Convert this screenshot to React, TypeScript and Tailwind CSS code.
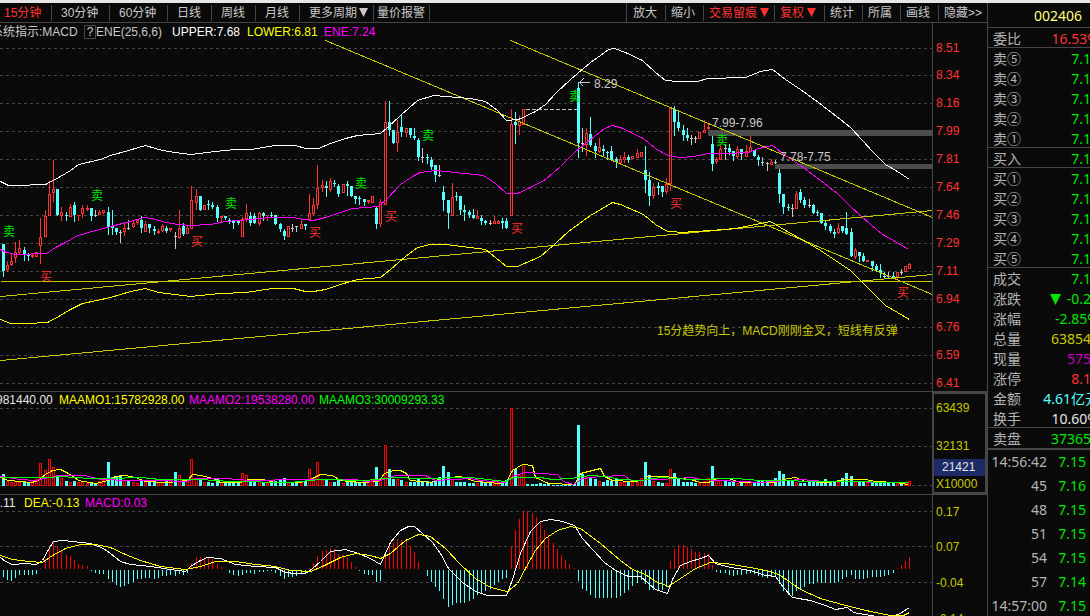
import clsx from 'clsx';

type Kind = 'u' | 'd' | 'w' | 'g';
// x, high, body top, body bottom, low, kind, volume bar, macd bar
type Bar = [number, number, number, number, number, Kind, number, number];

const bars: Bar[] = [
  [3, 244, 244, 271, 276, 'd', 12, -7], [7, 261, 265, 270, 272, 'u', 5, -10], [11, 253, 261, 265, 266, 'u', 4, -11],
  [15, 242, 252, 258, 263, 'u', 5, -8], [19, 240, 248, 253, 254, 'u', 4, -5], [24, 247, 250, 255, 260, 'd', 4, -5],
  [28, 253, 255, 256, 260, 'd', 3, -5], [32, 253, 255, 257, 258, 'u', 5, -5], [36, 252, 252, 257, 257, 'u', 7, -4],
  [40, 218, 237, 246, 264, 'u', 23, 1], [45, 210, 216, 237, 237, 'u', 16, 10], [49, 181, 194, 216, 216, 'u', 27, 20],
  [53, 160, 189, 193, 202, 'u', 19, 27], [57, 189, 189, 215, 215, 'd', 10, 23], [61, 207, 212, 216, 221, 'u', 8, 19],
  [66, 212, 215, 216, 220, 'd', 5, 14], [70, 204, 207, 217, 217, 'u', 4, 13], [74, 202, 205, 215, 221, 'd', 5, 9],
  [78, 215, 215, 216, 221, 'u', 4, 5], [82, 205, 208, 214, 218, 'u', 4, 4], [87, 205, 208, 210, 211, 'u', 3, 3],
  [91, 208, 208, 216, 220, 'd', 3, -1], [95, 210, 215, 215, 216, 'w', 3, -3], [99, 210, 212, 215, 215, 'u', 5, -4],
  [103, 210, 210, 213, 214, 'u', 6, -4], [108, 207, 212, 227, 234, 'd', 24, -9], [112, 210, 226, 228, 234, 'd', 9, -12],
  [116, 228, 228, 232, 234, 'd', 9, -15], [120, 230, 232, 232, 242, 'w', 11, -17], [124, 224, 228, 232, 236, 'u', 5, -16],
  [128, 220, 228, 228, 229, 'w', 5, -14], [133, 220, 223, 227, 228, 'u', 4, -12], [137, 219, 220, 223, 225, 'u', 3, -9],
  [141, 216, 220, 228, 232, 'd', 6, -9], [145, 221, 224, 232, 232, 'u', 4, -8], [149, 224, 224, 228, 232, 'd', 4, -8],
  [154, 226, 229, 231, 234, 'd', 4, -9], [158, 229, 231, 233, 234, 'u', 4, -8], [162, 224, 226, 231, 232, 'u', 4, -6],
  [166, 226, 228, 231, 232, 'd', 5, -6], [170, 228, 228, 230, 232, 'u', 6, -5], [175, 232, 236, 236, 248, 'w', 14, -6],
  [179, 210, 228, 238, 239, 'u', 11, -4], [183, 223, 226, 234, 235, 'd', 6, -5], [187, 226, 228, 234, 234, 'u', 5, -3],
  [191, 186, 200, 229, 229, 'u', 27, 6], [196, 189, 196, 203, 210, 'u', 8, 12], [200, 196, 196, 210, 210, 'd', 6, 12],
  [204, 205, 205, 210, 210, 'u', 4, 12], [208, 200, 204, 205, 209, 'd', 4, 11], [212, 202, 205, 207, 208, 'd', 3, 10],
  [217, 205, 207, 218, 221, 'd', 7, 5], [221, 216, 216, 218, 222, 'u', 4, 2], [225, 216, 216, 218, 219, 'd', 4, 0],
  [229, 218, 220, 222, 223, 'd', 4, -3], [233, 220, 221, 223, 228, 'd', 5, -5], [238, 221, 221, 223, 224, 'd', 5, -6],
  [242, 217, 219, 237, 237, 'u', 13, -5], [246, 204, 213, 219, 222, 'u', 11, -3], [250, 212, 216, 223, 225, 'd', 5, -3],
  [254, 213, 216, 223, 223, 'd', 5, -4], [259, 212, 213, 224, 226, 'u', 5, -2], [263, 212, 213, 216, 220, 'd', 4, -2],
  [267, 215, 215, 216, 221, 'u', 3, -1], [271, 212, 215, 216, 217, 'd', 4, -1], [275, 215, 215, 224, 224, 'd', 5, -3],
  [280, 223, 224, 229, 231, 'd', 6, -6], [284, 229, 231, 236, 239, 'd', 8, -9], [288, 226, 226, 237, 237, 'u', 4, -7],
  [292, 224, 228, 228, 231, 'w', 3, -7], [296, 226, 226, 226, 231, 'w', 4, -6], [301, 220, 224, 229, 229, 'u', 5, -4],
  [305, 224, 224, 226, 229, 'd', 5, -3], [309, 194, 213, 220, 221, 'u', 17, 1], [313, 198, 205, 214, 215, 'u', 8, 6],
  [317, 165, 188, 205, 209, 'u', 24, 13], [322, 180, 185, 188, 192, 'u', 6, 18], [326, 181, 186, 188, 196, 'd', 6, 19],
  [330, 178, 181, 190, 192, 'u', 4, 21], [334, 180, 183, 184, 186, 'd', 4, 20], [338, 184, 186, 194, 196, 'd', 6, 15],
  [343, 184, 184, 193, 193, 'u', 3, 14], [347, 181, 184, 186, 195, 'd', 4, 12], [351, 186, 186, 196, 196, 'd', 4, 7],
  [355, 196, 196, 199, 203, 'd', 4, 2], [359, 196, 198, 199, 204, 'd', 3, -1], [364, 199, 199, 202, 205, 'd', 3, -4],
  [368, 200, 200, 202, 204, 'u', 4, -5], [372, 196, 196, 203, 203, 'u', 6, -5], [376, 206, 208, 224, 228, 'd', 19, -12],
  [380, 199, 202, 224, 227, 'u', 8, -11], [385, 101, 122, 205, 205, 'u', 41, 13], [389, 101, 122, 130, 135, 'd', 17, 24],
  [393, 130, 130, 143, 143, 'd', 7, 26], [397, 120, 132, 143, 152, 'u', 7, 30], [401, 114, 127, 132, 136, 'd', 6, 29],
  [406, 128, 128, 133, 137, 'u', 4, 28], [410, 128, 128, 135, 137, 'd', 4, 23], [414, 128, 136, 138, 139, 'd', 4, 17],
  [418, 138, 140, 157, 160, 'd', 8, 7], [422, 148, 157, 157, 162, 'w', 5, 0], [427, 154, 157, 158, 163, 'd', 5, -6],
  [431, 157, 160, 167, 169, 'd', 4, -12], [435, 165, 165, 175, 181, 'd', 6, -17], [439, 165, 175, 175, 176, 'w', 9, -21],
  [443, 186, 192, 200, 210, 'd', 20, -29], [448, 200, 200, 213, 228, 'd', 14, -37], [452, 183, 197, 216, 216, 'u', 7, -35],
  [456, 192, 196, 197, 200, 'd', 4, -33], [460, 196, 196, 210, 214, 'd', 4, -33], [464, 205, 210, 212, 220, 'd', 4, -33],
  [469, 210, 212, 215, 217, 'd', 3, -31], [473, 209, 215, 218, 218, 'd', 3, -29], [477, 210, 216, 219, 219, 'u', 3, -25],
  [481, 215, 218, 221, 224, 'd', 5, -23], [485, 220, 221, 223, 224, 'd', 4, -21], [490, 220, 223, 223, 224, 'w', 3, -19],
  [494, 216, 221, 224, 224, 'u', 4, -15], [498, 220, 221, 224, 224, 'u', 4, -12], [502, 218, 221, 223, 228, 'd', 5, -9],
  [506, 218, 221, 228, 228, 'd', 6, -8], [511, 109, 124, 216, 216, 'u', 78, 22], [515, 112, 122, 125, 143, 'd', 17, 39],
  [519, 116, 121, 126, 135, 'u', 11, 50], [523, 109, 109, 125, 125, 'u', 20, 57], [527, 0, 0, 0, 0, 'g', 2, 58],
  [532, 0, 0, 0, 0, 'g', 2, 56], [536, 0, 0, 0, 0, 'g', 2, 52], [540, 0, 0, 0, 0, 'g', 3, 46],
  [544, 0, 0, 0, 0, 'g', 2, 39], [548, 0, 0, 0, 0, 'g', 2, 34], [553, 0, 0, 0, 0, 'g', 1, 26],
  [557, 0, 0, 0, 0, 'g', 1, 20], [561, 0, 0, 0, 0, 'g', 1, 14], [565, 0, 0, 0, 0, 'g', 1, 9],
  [569, 0, 0, 0, 0, 'g', 1, 5], [574, 0, 0, 0, 0, 'g', 2, 1], [578, 82, 88, 143, 157, 'd', 61, -11],
  [582, 128, 143, 143, 151, 'w', 12, -19], [586, 128, 133, 145, 156, 'u', 9, -21], [590, 117, 134, 145, 146, 'd', 8, -25],
  [595, 143, 146, 151, 157, 'd', 7, -28], [599, 138, 147, 152, 153, 'u', 5, -28], [603, 145, 149, 151, 155, 'd', 4, -28],
  [607, 151, 152, 153, 159, 'd', 6, -28], [611, 146, 151, 160, 160, 'd', 5, -28], [616, 157, 159, 162, 167, 'd', 7, -28],
  [620, 155, 159, 163, 165, 'u', 4, -26], [624, 152, 157, 160, 163, 'u', 4, -23], [628, 155, 157, 160, 162, 'd', 4, -20],
  [632, 156, 156, 159, 159, 'u', 4, -16], [637, 149, 153, 158, 158, 'u', 4, -13], [641, 152, 152, 157, 157, 'u', 8, -10],
  [645, 146, 170, 180, 192, 'd', 24, -14], [649, 172, 180, 196, 205, 'd', 11, -20], [653, 183, 187, 196, 199, 'u', 5, -20],
  [658, 182, 186, 188, 194, 'd', 4, -20], [662, 186, 186, 192, 196, 'd', 3, -20], [666, 178, 184, 192, 194, 'u', 3, -17],
  [670, 108, 108, 184, 191, 'u', 17, 8], [674, 106, 109, 122, 135, 'd', 13, 20], [678, 112, 122, 128, 130, 'd', 7, 24],
  [683, 125, 130, 135, 140, 'd', 4, 24], [687, 128, 135, 138, 140, 'd', 4, 22], [691, 135, 138, 138, 144, 'w', 4, 20],
  [695, 136, 138, 138, 142, 'w', 3, 17], [699, 132, 132, 139, 139, 'u', 3, 17], [704, 120, 130, 133, 133, 'u', 5, 16],
  [708, 124, 127, 129, 133, 'u', 8, 15], [712, 136, 144, 164, 170, 'd', 20, 4], [716, 157, 159, 162, 164, 'u', 7, -2],
  [720, 145, 149, 160, 160, 'u', 6, -3], [725, 144, 148, 148, 159, 'w', 5, -3], [729, 144, 148, 152, 154, 'd', 4, -5],
  [733, 151, 151, 156, 160, 'd', 5, -6], [737, 146, 149, 157, 159, 'u', 3, -5], [741, 149, 149, 154, 159, 'd', 3, -5],
  [746, 145, 151, 157, 157, 'u', 4, -4], [750, 136, 147, 152, 152, 'u', 4, -3], [754, 150, 150, 156, 156, 'd', 4, -4],
  [758, 155, 157, 160, 165, 'd', 5, -6], [762, 157, 162, 162, 165, 'w', 5, -7], [767, 162, 163, 163, 170, 'w', 5, -8],
  [771, 159, 162, 165, 165, 'u', 4, -7], [775, 160, 162, 162, 165, 'w', 8, -7], [779, 169, 173, 194, 202, 'd', 15, -14],
  [783, 194, 194, 207, 213, 'd', 12, -21], [788, 204, 207, 208, 210, 'd', 5, -25], [792, 204, 208, 208, 216, 'w', 5, -26],
  [796, 191, 194, 209, 209, 'u', 4, -21], [800, 189, 192, 200, 202, 'd', 3, -19], [804, 197, 200, 205, 207, 'd', 3, -17],
  [809, 199, 205, 205, 207, 'w', 4, -14], [813, 204, 205, 213, 213, 'd', 4, -14], [817, 210, 212, 213, 215, 'd', 4, -12],
  [821, 213, 213, 223, 223, 'd', 4, -13], [825, 221, 223, 226, 229, 'd', 7, -13], [830, 224, 226, 231, 232, 'd', 5, -13],
  [834, 229, 232, 234, 237, 'd', 5, -13], [838, 223, 228, 233, 234, 'u', 4, -12], [842, 226, 226, 231, 232, 'd', 8, -9],
  [846, 212, 228, 234, 234, 'd', 13, -7], [851, 228, 232, 256, 256, 'd', 10, -5], [855, 248, 250, 257, 259, 'u', 5, -9],
  [859, 252, 252, 256, 261, 'd', 5, -9], [863, 253, 256, 261, 261, 'd', 5, -9], [867, 260, 260, 262, 262, 'u', 4, -8],
  [872, 261, 261, 266, 270, 'd', 4, -7], [876, 264, 266, 270, 271, 'd', 4, -7], [880, 264, 270, 273, 277, 'd', 4, -7],
  [884, 272, 276, 277, 278, 'd', 4, -6], [888, 272, 276, 276, 277, 'w', 4, -5], [893, 272, 276, 277, 278, 'd', 4, -3],
  [897, 272, 272, 277, 279, 'u', 4, 1], [901, 269, 272, 272, 274, 'w', 3, 4], [905, 266, 266, 272, 272, 'u', 3, 8],
  [909, 263, 264, 269, 269, 'u', 5, 12],
];

const upper = '0,181 8,185 15,185 45,184 60,176 70,170 78,164 100,159 110,155 128,150 145,145 155,148 162,150 175,152 190,154 215,151 235,149 250,149 275,145 295,145 305,148 318,148 330,143 345,138 357,135 380,133 387,127 400,115 417,100 433,95 445,96 470,98 485,101 497,110 506,120 518,119 535,111 545,104 555,93 570,79 590,62 600,55 608,49 614,48 625,52 642,60 655,72 665,80 678,81 697,81 707,78 745,77 760,71 772,69 785,79 800,89 818,102 840,119 850,127 862,140 872,151 885,164 897,171 909,179';
const middle = '0,249 6,252 15,254 46,253 55,247 65,242 75,236 88,232 110,226 130,221 143,217 152,218 165,222 178,224 190,225 210,224 225,221 250,219 270,217 293,217 303,219 313,220 325,217 340,212 352,208 378,206 386,199 400,184 412,176 420,172 435,170 455,172 483,175 495,183 506,193 517,193 530,187 545,179 560,166 575,151 590,139 604,128 612,125 620,127 643,138 655,148 667,155 680,157 693,156 708,153 725,153 748,152 758,148 772,145 785,155 800,165 820,180 837,193 850,206 870,224 882,234 895,241 908,249';
const lower = '0,319 10,323 27,323 47,322 60,315 70,309 82,303 110,297 130,291 145,288 158,292 175,294 190,296 220,293 245,292 272,288 293,288 305,291 313,291 325,289 340,284 357,279 380,277 390,269 405,256 417,247 430,244 445,244 485,249 495,257 506,266 517,266 540,256 555,243 568,231 590,215 612,202 620,204 643,214 655,224 667,231 672,231 680,232 710,230 735,228 755,224 770,221 785,230 805,241 820,250 850,270 870,290 885,305 909,319';

const ma1 = '0,477 8,480 20,481 30,482 36,481 45,474 52,470 60,469 68,473 78,480 95,483 108,480 115,476 125,475 135,477 145,481 165,482 180,481 188,479 192,474 200,475 213,478 220,482 240,482 248,479 262,479 275,482 300,482 312,478 320,474 332,475 340,480 360,482 378,481 384,473 393,470 400,470 406,473 410,480 430,482 440,478 460,476 475,481 500,483 506,481 512,470 522,464 532,465 535,477 548,483 574,484 580,473 592,470 600,468 604,476 612,480 632,481 643,480 647,476 665,476 672,477 690,479 700,482 708,482 716,478 728,478 740,482 775,482 783,479 795,477 805,481 828,482 845,479 865,479 875,481 895,482 908,484';
const ma2 = '0,476 20,479 35,480 58,475 85,475 100,479 130,480 160,480 185,481 195,478 225,478 250,480 300,479 355,479 365,481 380,480 395,475 425,475 435,480 470,478 480,480 505,482 512,476 524,472 557,474 563,481 573,484 582,478 600,476 624,475 630,480 660,479 692,477 700,479 760,482 800,479 825,481 908,482';
const ma3 = '0,477 50,477 60,476 90,478 110,478 140,477 160,479 200,479 230,481 290,482 320,479 365,480 395,477 420,478 470,477 505,481 513,477 540,477 552,479 570,478 590,475 605,476 620,479 640,480 660,477 690,479 735,478 760,480 908,482';

const dif = '0,556 5,560 12,563 25,562 36,563 42,559 48,548 53,540 62,539 72,540 90,542 103,547 110,552 120,560 130,563 150,565 170,568 185,570 190,565 198,560 207,556 220,557 235,563 255,565 275,566 285,571 295,572 305,572 312,567 320,560 330,550 345,548 358,552 370,557 380,563 385,552 390,541 400,529 408,525 414,525 422,532 432,541 440,552 448,567 462,581 475,590 487,594 506,594 512,578 520,552 530,530 540,520 550,518 562,520 574,524 582,537 592,548 604,561 615,569 628,575 640,575 648,582 655,588 667,592 672,578 680,564 690,560 700,557 708,554 715,562 730,566 750,569 765,574 775,575 783,586 792,596 810,599 825,604 835,608 847,606 853,611 870,614 885,616 898,613 909,606';
const dea = '0,554 12,558 28,560 42,561 52,554 65,547 80,543 95,543 110,546 125,553 140,559 160,565 185,568 200,565 215,560 235,560 255,563 275,565 290,569 310,570 322,565 340,556 355,552 370,554 380,557 390,552 405,539 418,533 430,535 445,547 460,563 475,577 490,586 507,590 517,582 525,567 535,549 545,537 557,529 570,525 580,527 600,542 620,559 632,568 645,573 655,580 668,585 680,577 695,567 710,561 725,562 750,566 770,570 780,574 800,588 820,597 845,604 870,610 890,614 903,614 909,611';

const sells = [[3, 236], [91, 200], [225, 208], [355, 188], [422, 140], [569, 101], [716, 145]];
const buys = [[40, 281], [191, 246], [309, 237], [385, 221], [511, 233], [670, 208], [897, 297]];

const periods = [
  { label: '15分钟', width: 'w-[52px] pl-1', active: true },
  { label: '30分钟', width: 'w-[58px] pl-[9px]' },
  { label: '60分钟', width: 'w-[58px] pl-[9px]' },
  { label: '日线', width: 'w-11 pl-[9px]' },
  { label: '周线', width: 'w-11 pl-[9px]' },
  { label: '月线', width: 'w-11 pl-[9px]' },
  { label: '更多周期', width: 'w-[74px] pl-[9px]', arrow: true },
  { label: '量价报警', width: 'w-14 pl-[3px]' },
];

const tools = [
  { label: '放大', width: 'w-[38px]' },
  { label: '缩小', width: 'w-[38px]' },
  { label: '交易留痕', width: 'w-[71px]', red: true },
  { label: '复权', width: 'w-[50px]', red: true },
  { label: '统计', width: 'w-[38px]' },
  { label: '所属', width: 'w-[38px]' },
  { label: '画线', width: 'w-[38px]' },
  { label: '隐藏>>', width: 'w-[49px]' },
];

const prices = ['8.51', '8.34', '8.16', '7.99', '7.81', '7.64', '7.46', '7.29', '7.11', '6.94', '6.76', '6.59', '6.41'];

const green = 'text-[#00e600]';

// cut: the last digit runs past the window edge
const quotes = [
  { label: '委比', value: '16.53%', color: 'text-[#ff3232]', line: true },
  { label: '卖⑤', value: '7.1', color: green, cut: true },
  { label: '卖④', value: '7.1', color: green, cut: true },
  { label: '卖③', value: '7.1', color: green, cut: true },
  { label: '卖②', value: '7.1', color: green, cut: true },
  { label: '卖①', value: '7.1', color: green, cut: true, line: true },
  { label: '买入', value: '7.1', color: green, cut: true, line: true },
  { label: '买①', value: '7.1', color: green, cut: true },
  { label: '买②', value: '7.1', color: green, cut: true },
  { label: '买③', value: '7.1', color: green, cut: true },
  { label: '买④', value: '7.1', color: green, cut: true },
  { label: '买⑤', value: '7.1', color: green, cut: true, line: true },
  { label: '成交', value: '7.1', color: green, cut: true },
  { label: '涨跌', value: '-0.2', color: green, cut: true, arrow: true },
  { label: '涨幅', value: '-2.85%', color: green },
  { label: '总量', value: '63854', color: 'text-[#c8c800]', cut: true },
  { label: '现量', value: '575', color: 'text-[#c800c8]', cut: true },
  { label: '涨停', value: '8.1', color: 'text-[#ff3232]', cut: true },
  { label: '金额', value: '4.61亿元', color: 'text-[#54ffff]' },
  { label: '换手', value: '10.60%', color: 'text-[#e6e6e6]', line: true },
  { label: '卖盘', value: '37365', color: green, cut: true },
];

const ticks = [
  ['14:56:42', '7.15'],
  ['45', '7.16'],
  ['48', '7.15'],
  ['51', '7.15'],
  ['54', '7.15'],
  ['57', '7.14'],
  ['14:57:00', '7.15'],
];

function Grid({ rows }: { rows: number[] }) {
  return (
    <g stroke="#464646" strokeDasharray="3 3">
      {rows.map((y) => (
        <line key={y} x1="0" x2="932" y1={y + 0.5} y2={y + 0.5} />
      ))}
    </g>
  );
}

function Lines({ items }: { items: string[][] }) {
  return (
    <g fill="none" transform="translate(0.5 0.5)">
      {items.map(([points, color]) => (
        <polyline key={points} points={points} stroke={color} />
      ))}
    </g>
  );
}

function Candle({ bar }: { bar: Bar }) {
  const [x, high, top, bottom, low, kind] = bar;
  if (kind === 'g') return null;
  if (kind === 'w') {
    return (
      <g fill="#c8c8c8">
        <rect x={x} y={high} width="1" height={low - high + 1} />
        <rect x={x - 1} y={top} width="3" height="1" />
      </g>
    );
  }
  if (kind === 'd') {
    return (
      <g fill="#54ffff">
        <rect x={x} y={high} width="1" height={low - high + 1} />
        <rect x={x - 1} y={top} width="3" height={Math.max(bottom - top, 1)} />
      </g>
    );
  }
  return (
    <g fill="#ff3232">
      <rect x={x} y={high} width="1" height={low - high} />
      <rect x={x - 1} y={top} width="3" height={bottom - top} />
      {bottom - top > 2 && <rect x={x} y={top + 1} width="1" height={bottom - top - 2} fill="#0a0a0a" />}
    </g>
  );
}

function PriceChart() {
  return (
    <svg className="block h-[351px] w-full" viewBox="0 40 932 351" preserveAspectRatio="xMinYMin slice" shapeRendering="crispEdges" fontSize="12">
      <Grid rows={[48, 75, 103, 131, 159, 187, 215, 243, 271, 299, 327, 355, 383]} />
      {bars.map((bar) => (
        <Candle key={bar[0]} bar={bar} />
      ))}
      <line x1="526" x2="577" y1="109.5" y2="109.5" stroke="#c8c8c8" strokeDasharray="4 2" />
      <g fill="#4c4c4c">
        <rect x="708" y="130" width="224" height="6" />
        <rect x="775" y="164" width="157" height="5" />
      </g>
      <Lines
        items={[
          ['325,40 932,294', '#c8c800'],
          ['510,40 932,217', '#c8c800'],
          ['0,296 932,210', '#c8c800'],
          ['0,360 932,274', '#c8c800'],
          ['0,281 932,281', '#c8c800'],
          [upper, '#ffffff'],
          [middle, '#ff00ff'],
          [lower, '#ffff00'],
        ]}
      />
      <path d="M590 82.5H579M583.5 78.5L579.5 82.5L583.5 86.5" fill="none" stroke="#c8c8c8" />
      <g fill="#c8c8c8">
        <text x="594" y="88">8.29</text>
        <text x="712" y="127">7.99-7.96</text>
        <text x="780" y="161">7.78-7.75</text>
      </g>
      <g fill="#00e600">
        {sells.map(([x, y]) => (
          <text key={x} x={x} y={y}>卖</text>
        ))}
      </g>
      <g fill="#ff3232">
        {buys.map(([x, y]) => (
          <text key={x} x={x} y={y}>买</text>
        ))}
      </g>
      <text x="657" y="335" fill="#c8c800">15分趋势向上，MACD刚刚金叉，短线有反弹</text>
    </svg>
  );
}

function VolumeChart() {
  return (
    <svg className="block h-[85px] w-full" viewBox="0 408 932 85" preserveAspectRatio="xMinYMin slice" shapeRendering="crispEdges">
      <Grid rows={[408, 446, 485]} />
      {bars.map(([x, , , , , kind, volume]) =>
        kind === 'u' ? (
          <g key={x}>
            <rect x={x - 1} y={486 - volume} width="3" height={volume} fill="#ff0000" />
            <rect x={x} y={487 - volume} width="1" height={volume - 2} fill="#0a0a0a" />
          </g>
        ) : (
          <rect key={x} x={x - 1} y={486 - volume} width="3" height={volume} fill="#54ffff" />
        )
      )}
      <Lines items={[[ma1, '#ffff00'], [ma2, '#ff00ff'], [ma3, '#00ff00']]} />
    </svg>
  );
}

function MacdChart() {
  return (
    <svg className="block h-[106px] w-full" viewBox="0 510 932 106" preserveAspectRatio="xMinYMin slice" shapeRendering="crispEdges">
      <Grid rows={[510, 545, 581]} />
      {bars.map(([x, , , , , , , macd]) => (
        <rect
          key={x}
          x={x}
          y={macd > 0 ? 568 - macd : 569}
          width="1"
          height={Math.abs(macd)}
          fill={macd > 0 ? '#ff0000' : '#54ffff'}
        />
      ))}
      <Lines items={[[dif, '#ffffff'], [dea, '#ffff00']]} />
    </svg>
  );
}

function Down({ className }: { className?: string }) {
  return (
    <svg className={clsx('shrink-0', className)} width="9" height="9" viewBox="0 0 9 9" fill="currentColor">
      <path d="M0 0H9L4.5 9Z" />
    </svg>
  );
}

function TopBar() {
  return (
    <nav className="flex h-5 shrink-0 justify-between border-b border-[#464646]">
      <div className="flex items-center">
        {periods.map((p) => (
          <button
            key={p.label}
            className={clsx('flex h-4 shrink-0 items-center whitespace-nowrap border-r border-[#464646]', p.width, p.active && 'text-[#ff3232]')}
          >
            {p.label}
            {p.arrow && <Down className="ml-0.5" />}
          </button>
        ))}
      </div>
      <div className="flex items-center border-l border-[#464646]">
        {tools.map((t, i) => (
          <button
            key={t.label}
            className={clsx(
              'flex h-4 shrink-0 items-center whitespace-nowrap',
              t.width,
              i > 0 ? 'border-l border-[#464646] pl-[5px]' : 'pl-1.5',
              t.red && 'text-[#ff3232]'
            )}
          >
            {t.label}
            {t.red && <Down className="ml-[3px]" />}
          </button>
        ))}
      </div>
    </nav>
  );
}

function SidePanel() {
  return (
    <aside className="w-[103px] shrink-0 overflow-hidden border-l border-[#464646] font-['Noto_Sans','Noto_Sans_CJK_SC',sans-serif] text-sm text-[#b4b4b4]">
      <div className="w-[111px]">
        <h1 className="flex h-[25px] items-center justify-end border-b border-[#464646] pr-[17px] pt-0.5 text-[#ffff80]">002406</h1>
        <dl className="border-b-2 border-[#464646]">
          {quotes.map((q) => (
            <div
              key={q.label}
              className={clsx(
                'flex h-5 items-center justify-between whitespace-nowrap border-[#464646] pl-[5px] pt-0.5',
                q.line && 'border-b',
                q.cut && 'pr-2'
              )}
            >
              <dt>{q.label}</dt>
              <dd className={clsx('flex items-center', q.color)}>
                {q.arrow && <Down className="mr-1.5 h-[11px] w-[11px]" />}
                {q.value}
              </dd>
            </div>
          ))}
        </dl>
        <ul>
          {ticks.map(([time, price]) => (
            <li key={time} className="flex h-6 items-center justify-end pr-[13px]">
              <span>{time}</span>
              <span className={clsx('w-[39px] text-right', green)}>{price}</span>
            </li>
          ))}
        </ul>
      </div>
    </aside>
  );
}

export default function App() {
  return (
    <div className="overflow-hidden bg-[#0a0a0a] font-['Liberation_Sans','Noto_Sans_CJK_SC',sans-serif] text-xs text-[#c8c8c8]">
      <div className="h-[3px] bg-[#e6e6e6]" />
      <div className="flex">
        <main className="min-w-0 flex-1">
          <TopBar />

          <section className="flex">
            <div className="min-w-0 flex-1 overflow-hidden">
              <div className="flex h-[17px] items-center whitespace-nowrap">
                <span className="-ml-[9px] w-[93px]">系统指示:MACD</span>
                <button className="flex h-3.5 w-3 items-center justify-center border border-[#464646]">?</button>
                <span className="w-19">ENE(25,6,6)</span>
                <span className="w-[75px] text-white">UPPER:7.68</span>
                <span className="w-[77px] text-[#ffff00]">LOWER:6.81</span>
                <span className="text-[#ff00ff]">ENE:7.24</span>
              </div>
              <PriceChart />
            </div>
            <ul className="w-[55px] shrink-0 border-l border-[#464646] pl-[3px] pt-[18px] leading-[14px] text-[#ff3232]">
              {prices.map((price) => (
                <li key={price} className="h-7 first:h-[27px] last:h-[14px]">{price}</li>
              ))}
            </ul>
          </section>

          <section className="flex border-t border-[#464646]">
            <div className="min-w-0 flex-1 overflow-hidden">
              <div className="flex h-4 items-center whitespace-nowrap">
                <span className="-ml-[4px] w-[63px] text-[#e6e6e6]">981440.00</span>
                <span className="w-[130px] text-[#ffff00]">MAAMO1:15782928.00</span>
                <span className="w-[130px] text-[#ff00ff]">MAAMO2:19538280.00</span>
                <span className="text-[#00ff00]">MAAMO3:30009293.33</span>
              </div>
              <VolumeChart />
            </div>
            <div className="flex w-[55px] shrink-0 flex-col border-2 border-[#464646] text-[#c8c800]">
              <span className="mt-[6px] pl-[2px]">63439</span>
              <span className="mt-[22px] pl-[2px]">32131</span>
              <span className="mt-[5px] h-[17px] bg-[#1c2a66] pl-2 text-[#e6e6e6]">21421</span>
              <span className="pl-[2px]">X10000</span>
            </div>
          </section>

          <section className="flex h-[123px] overflow-hidden border-t border-[#464646]">
            <div className="min-w-0 flex-1 overflow-hidden">
              <div className="flex h-4 items-center whitespace-nowrap">
                <span className="-ml-[7px] w-[31px] text-[#e6e6e6]">0.11</span>
                <span className="w-[61px] text-[#ffff00]">DEA:-0.13</span>
                <span className="text-[#ff00ff]">MACD:0.03</span>
              </div>
              <MacdChart />
            </div>
            <ul className="w-[55px] shrink-0 border-l border-[#464646] pl-[3px] text-[#c8c800]">
              <li className="flex h-[34px] items-center">0.17</li>
              <li className="flex h-9 items-center">0.07</li>
              <li className="flex h-9 items-center">-0.04</li>
              <li className="flex h-9 items-center">-0.14</li>
            </ul>
          </section>
        </main>
        <SidePanel />
      </div>
    </div>
  );
}
